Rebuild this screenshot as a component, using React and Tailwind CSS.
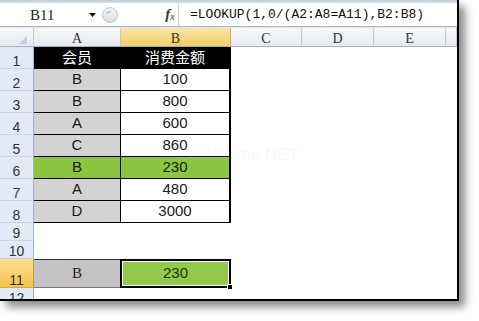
import React from "react";

const SANS = { fontFamily: '"Liberation Sans", Arial, sans-serif' };
const SERIF = { fontFamily: '"Liberation Serif", "Times New Roman", serif' };
const MONO = { fontFamily: '"Liberation Mono", "Courier New", monospace' };
const CJK = { fontFamily: '"Noto Sans CJK SC", "Noto Sans", sans-serif' };

const headerCols = [
  { w: "w-[87px]", l: "A", active: false },
  { w: "w-[110px]", l: "B", active: true },
  { w: "w-[71px]", l: "C", active: false },
  { w: "w-[72px]", l: "D", active: false },
  { w: "w-[72px]", l: "E", active: false },
  { w: "w-[11px]", l: "", active: false },
];

const dataRows = [
  { n: 2, a: "B", b: "100", green: false },
  { n: 3, a: "B", b: "800", green: false },
  { n: 4, a: "A", b: "600", green: false },
  { n: 5, a: "C", b: "860", green: false },
  { n: 6, a: "B", b: "230", green: true },
  { n: 7, a: "A", b: "480", green: false },
  { n: 8, a: "D", b: "3000", green: false },
];

function RowHead({ n, h, active }) {
  return (
    <div
      className={
        active
          ? `${h} w-[34px] shrink-0 flex items-end justify-center border-r border-b border-r-[#c99a2e] border-b-[#d9a83a] bg-linear-to-b from-[#fbe08e] to-[#f3c648] text-[14px] leading-[14px] text-[#333]`
          : `${h} w-[34px] shrink-0 flex items-end justify-center border-r border-b border-r-[#9fb4cc] border-b-[#c9d5e4] bg-[#e2eaf6] text-[14px] leading-[14px] text-[#333]`
      }
      style={SANS}
    >
      {n}
    </div>
  );
}

function EmptyRest() {
  return (
    <>
      <div className="w-[71px] shrink-0" />
      <div className="w-[72px] shrink-0" />
      <div className="w-[72px] shrink-0" />
      <div className="w-[11px] shrink-0" />
    </>
  );
}

export default function App() {
  return (
    <div className="w-[479px] h-[321px] bg-white overflow-hidden">
      <div className="relative w-[459px] h-[301px] border-r-2 border-b-2 border-black bg-white overflow-hidden shadow-[6px_6px_8px_rgba(0,0,0,0.45)]">
        {/* top strip */}
        <div className="h-[3px] bg-linear-to-b from-[#c3ccd8] to-[#d7dde6]" />

        {/* formula bar */}
        <div className="flex h-[23px] bg-white items-stretch">
          <div className="w-[100px] flex items-center pl-[30px] pr-[4px]">
            <span className="text-[15px] text-[#222] leading-none pt-[1px]" style={SERIF}>
              B11
            </span>
            <svg className="ml-auto" width="7" height="4" viewBox="0 0 7 4">
              <polygon points="0,0 7,0 3.5,4" fill="#111" />
            </svg>
          </div>
          <div className="w-[20px] flex items-center justify-center">
            <svg width="16" height="18" viewBox="0 0 16 18">
              <defs>
                <linearGradient id="kg" x1="0" y1="0" x2="0" y2="1">
                  <stop offset="0" stopColor="#f4f6f8" />
                  <stop offset="1" stopColor="#d8dde3" />
                </linearGradient>
              </defs>
              <circle cx="8" cy="9" r="7.4" fill="url(#kg)" stroke="#bcc3cc" strokeWidth="1" />
              <path d="M4.5 7.5 Q6 5.5 8.5 6" stroke="#aab1ba" strokeWidth="1.2" fill="none" />
            </svg>
          </div>
          <div className="w-[42px]" />
          <div className="w-[16px] flex items-center justify-center text-[#3a3a3a]" style={SERIF}>
            <span className="italic font-bold text-[15px] leading-none">f</span>
            <span className="italic text-[10px] leading-none mt-[5px]">x</span>
          </div>
          <div className="flex-1 flex items-center pl-[11px] border-l border-[#c9d1dc]">
            <span className="text-[13px] text-[#111] leading-none whitespace-nowrap" style={MONO}>
              =LOOKUP(1,0/(A2:A8=A11),B2:B8)
            </span>
          </div>
        </div>
        <div className="h-[2px] border-t border-[#aeb9c8] bg-[#dfe5ec]" />

        {/* column header */}
        <div className="flex h-[19px] border-b border-[#9fb2c8]">
          <div className="w-[34px] shrink-0 relative border-r border-[#c3cad4] bg-linear-to-b from-[#f7f9fb] to-[#e6eaf0]">
            <svg className="absolute right-[6px] bottom-[2px]" width="8" height="8" viewBox="0 0 8 8">
              <polygon points="8,0 8,8 0,8" fill="#c8ced6" />
            </svg>
          </div>
          {headerCols.map((c, i) => (
            <div
              key={i}
              className={
                c.active
                  ? `${c.w} shrink-0 flex items-end justify-center border-r border-[#d8b260] bg-linear-to-b from-[#fbe4a6] to-[#f5cd6a] text-[14px] leading-[14px] text-[#333]`
                  : `${c.w} shrink-0 flex items-end justify-center border-r border-[#c3cad4] bg-linear-to-b from-[#f7f9fb] to-[#e6eaf0] text-[14px] leading-[14px] text-[#333]`
              }
              style={SERIF}
            >
              {c.l}
            </div>
          ))}
        </div>

        {/* row 1 */}
        <div className="flex h-[22px]">
          <RowHead n={1} h="h-[22px]" />
          <div className="w-[87px] shrink-0 flex items-center justify-center bg-black border-r border-b border-black text-white text-[15px]" style={CJK}>
            会员
          </div>
          <div className="w-[110px] shrink-0 flex items-center justify-center bg-black border-r-2 border-b border-black text-white text-[15px]" style={CJK}>
            消费金额
          </div>
          <EmptyRest />
        </div>

        {/* rows 2-8 */}
        {dataRows.map((r) => (
          <div key={r.n} className="flex h-[22px]">
            <RowHead n={r.n} h="h-[22px]" />
            <div
              className={
                r.green
                  ? "w-[87px] shrink-0 flex items-center justify-center bg-[#8cc640] border-r border-b border-black text-[#1a1a1a] text-[15px]"
                  : "w-[87px] shrink-0 flex items-center justify-center bg-[#d4d3d4] border-r border-b border-black text-[#1a1a1a] text-[15px]"
              }
              style={SANS}
            >
              {r.a}
            </div>
            <div
              className={
                r.green
                  ? "w-[110px] shrink-0 flex items-center justify-center bg-[#8cc640] border-r-2 border-b border-black text-[#1a1a1a] text-[15px]"
                  : "w-[110px] shrink-0 flex items-center justify-center bg-white border-r-2 border-b border-black text-[#1a1a1a] text-[15px]"
              }
              style={SANS}
            >
              {r.b}
            </div>
            <EmptyRest />
          </div>
        ))}

        {/* rows 9, 10 */}
        <div className="flex h-[18px]">
          <RowHead n={9} h="h-[18px]" />
        </div>
        <div className="flex h-[18px]">
          <RowHead n={10} h="h-[18px]" />
        </div>

        {/* row 11 */}
        <div className="flex h-[29px]">
          <RowHead n={11} h="h-[29px]" active />
          <div className="w-[86px] shrink-0 flex items-center justify-center bg-[#c4c2c4] border-t border-b border-t-[#333] border-b-[#777] text-[15px] text-[#222]" style={SERIF}>
            B
          </div>
          <div className="relative w-[111px] shrink-0 border-2 border-black">
            <div className="h-full w-full border border-white bg-[#92c84c] flex items-center justify-center text-[15px] text-[#1d3010]" style={SANS}>
              230
            </div>
            <div className="absolute -right-[4px] -bottom-[4px] w-[6px] h-[6px] bg-black border border-white" />
          </div>
          <EmptyRest />
        </div>

        {/* row 12 */}
        <div className="flex h-[18px]">
          <RowHead n={12} h="h-[18px]" />
        </div>

        {/* watermark */}
        <div className="absolute left-[176px] top-[142px] text-[17px] text-[#c4c8d0]/15 whitespace-nowrap pointer-events-none" style={SANS}>
          Excelhome NET
        </div>
      </div>
    </div>
  );
}
